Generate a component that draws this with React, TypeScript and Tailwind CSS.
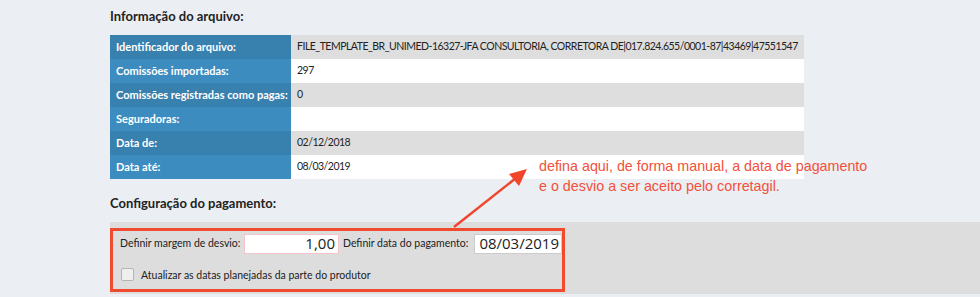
import React from 'react';

const rows: { label: string; value: string }[] = [
  { label: 'Identificador do arquivo:', value: 'FILE_TEMPLATE_BR_UNIMED-16327-JFA CONSULTORIA, CORRETORA DE|017.824.655/0001-87|43469|47551547' },
  { label: 'Comissões importadas:', value: '297' },
  { label: 'Comissões registradas como pagas:', value: '0' },
  { label: 'Seguradoras:', value: '' },
  { label: 'Data de:', value: '02/12/2018' },
  { label: 'Data até:', value: '08/03/2019' },
];

export default function App() {
  return (
    <div className="relative h-[297px] w-[980px] overflow-hidden bg-[#ebeef3] font-['Lato',sans-serif] text-[#222]">
      <div className="pl-[110px] pt-[8px]">
        <h2 className="h-[27px] text-[13px] font-bold leading-[16px] text-[#222]">Informação do arquivo:</h2>

        <table className="w-[694px] table-fixed border-collapse text-[11px]">
          <colgroup>
            <col className="w-[181px]" />
            <col />
          </colgroup>
          <tbody>
            {rows.map((r, i) => (
              <tr key={r.label} className="h-[24px]">
                <td
                  className={`whitespace-nowrap pl-[6px] font-bold text-white ${
                    i % 2 === 0 ? 'bg-[#3880ae]' : 'bg-[#3c8cbf]'
                  }`}
                >
                  {r.label}
                </td>
                <td
                  className={`whitespace-nowrap pl-[6px] text-[10.5px] tracking-[-0.5px] ${
                    i % 2 === 0 ? 'bg-[#dedede]' : 'bg-white'
                  }`}
                >
                  {r.value}
                </td>
              </tr>
            ))}
          </tbody>
        </table>

        <h2 className="mt-[16px] h-[27px] text-[13px] font-bold leading-[16px] text-[#222]">Configuração do pagamento:</h2>

        <div className="h-[72px] bg-[#dddddd] pt-[6px]">
          <div className="h-[64px] w-[455px] border-[3px] border-[#f04a2f] pl-[7px] pt-[2px]">
            <div className="flex h-[21px] items-center whitespace-nowrap text-[10.5px]">
              <span>Definir margem de desvio:</span>
              <div className="ml-[4px] flex h-[20px] w-[96px] items-center justify-end border border-[#f6c3c8] bg-white pr-[3px] font-['Open_Sans',sans-serif] text-[15px]">
                1,00
              </div>
              <span className="ml-[4px]">Definir data do pagamento:</span>
              <div className="ml-[6px] flex h-[20px] w-[89px] items-center justify-end border border-[#cccccc] bg-white pr-[2px] font-['Open_Sans',sans-serif] text-[15px]">
                08/03/2019
              </div>
            </div>
            <div className="mt-[11px] flex items-center whitespace-nowrap text-[10.5px]">
              <span className="ml-[1px] h-[13px] w-[13px] rounded-[2px] border border-[#b5b5b5] bg-[#efefef]" />
              <span className="ml-[7px] mt-[3px]">Atualizar as datas planejadas da parte do produtor</span>
            </div>
          </div>
        </div>
      </div>

      <div className="absolute left-[539px] top-[156px] font-['Liberation_Sans',Arial,sans-serif] text-[14.3px] leading-[20px] text-[#f3503a]">
        <p>defina aqui, de forma manual, a data de pagamento</p>
        <p>e o desvio a ser aceito pelo corretagil.</p>
      </div>

      <svg className="absolute left-0 top-0" width="980" height="297" viewBox="0 0 980 297">
        <line x1="454" y1="227" x2="516" y2="178" stroke="#f0462c" strokeWidth="2.5" />
        <polygon points="527,169 509,174 519,186" fill="#f0462c" />
      </svg>
    </div>
  );
}
